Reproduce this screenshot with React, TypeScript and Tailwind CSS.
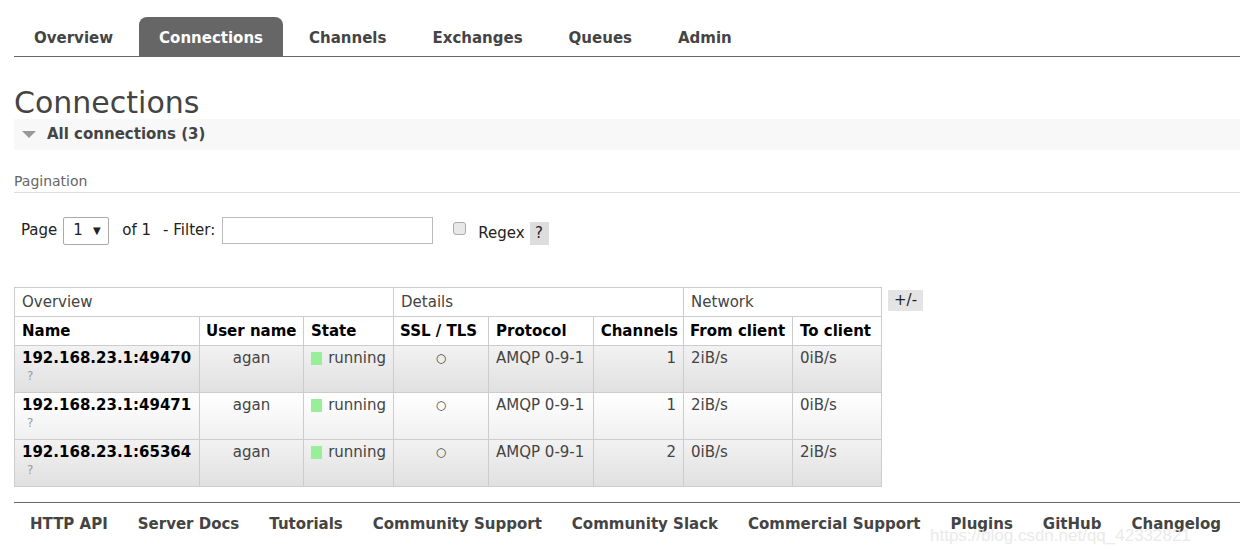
const TABS = ["Overview", "Connections", "Channels", "Exchanges", "Queues", "Admin"];

const ROWS = [
  { name: "192.168.23.1:49470", channels: 1, from: "2iB/s", to: "0iB/s", alt: false },
  { name: "192.168.23.1:49471", channels: 1, from: "2iB/s", to: "0iB/s", alt: true },
  { name: "192.168.23.1:65364", channels: 2, from: "0iB/s", to: "2iB/s", alt: false },
];

const FOOTER = [
  "HTTP API",
  "Server Docs",
  "Tutorials",
  "Community Support",
  "Community Slack",
  "Commercial Support",
  "Plugins",
  "GitHub",
  "Changelog",
];

const td = "border border-[#ccc] px-[7px] pt-[3px] align-top whitespace-nowrap";
const th = "border border-[#ccc] px-[7px] h-[29px] text-left font-bold text-black whitespace-nowrap";

export default function App() {
  return (
    <div className="relative h-[552px] w-[1240px] overflow-hidden bg-white pl-[14px] font-['DejaVu_Sans',Verdana,sans-serif] text-[15px] text-[#444]">
      {/* tabs */}
      <ul className="flex h-[57px] items-end border-b border-[#666]">
        {TABS.map((t) => (
          <li
            key={t}
            className={
              t === "Connections"
                ? "mr-[6px] flex h-[39px] items-center rounded-t-[8px] bg-[#666] px-[20px] pt-[3px] font-bold text-white"
                : "mr-[6px] flex h-[39px] items-center px-[20px] pt-[3px] font-bold text-[#444]"
            }
          >
            {t}
          </li>
        ))}
      </ul>

      <h1 className="mt-[29px] h-[33px] text-[30px] leading-[33px] text-[#444]">Connections</h1>

      <div className="flex h-[31px] items-center bg-[#f8f8f8] pl-[8px]">
        <span className="mr-[11px] h-0 w-0 border-x-[7px] border-t-[7px] border-x-transparent border-t-[#999]" />
        <span className="font-bold text-[#444]">All connections (3)</span>
      </div>

      <div className="mt-[22px] border-b border-[#ddd] pb-[2px] text-[14px] leading-[18px] text-[#666]">Pagination</div>

      <div className="mt-[23px] flex items-center pl-[7px] text-[#222]">
        <span>Page</span>
        <span className="ml-[6px] flex h-[28px] w-[46px] items-center rounded-[2px] border border-[#aaa] pl-[9px] text-[#222]">
          1<span className="ml-[10px] text-[10px]">▼</span>
        </span>
        <span className="ml-[13px]">of 1</span>
        <span className="ml-[12px]">- Filter:</span>
        <span className="ml-[7px] h-[27px] w-[211px] border border-[#bbb] bg-white" />
        <span className="ml-[20px] -mt-[5px] h-[13px] w-[13px] rounded-[3px] border border-[#aaa] bg-[#e8e8e8]" />
        <span className="ml-[12px] mt-[6px]">Regex</span>
        <span className="ml-[5px] mt-[6px] flex h-[23px] w-[19px] items-center justify-center bg-[#ddd]">?</span>
      </div>

      {/* table */}
      <div className="mt-[42px] flex items-start">
        <table className="w-[867px] table-fixed border-collapse text-[15px] leading-[18px]">
          <colgroup>
            <col className="w-[185px]" />
            <col className="w-[104px]" />
            <col className="w-[90px]" />
            <col className="w-[95px]" />
            <col className="w-[105px]" />
            <col className="w-[90px]" />
            <col className="w-[109px]" />
            <col className="w-[89px]" />
          </colgroup>
          <thead>
            <tr className="h-[29px] text-[#444]">
              <td colSpan={3} className="border border-[#ccc] px-[7px]">Overview</td>
              <td colSpan={3} className="border border-[#ccc] px-[7px]">Details</td>
              <td colSpan={2} className="border border-[#ccc] px-[7px]">Network</td>
            </tr>
            <tr>
              <th className={th}>Name</th>
              <th className={th + " !px-[6px]"}>User name</th>
              <th className={th}>State</th>
              <th className={th + " !px-[6px]"}>SSL / TLS</th>
              <th className={th}>Protocol</th>
              <th className={th + " !px-[5px] !text-right"}>Channels</th>
              <th className={th + " !px-[6px]"}>From client</th>
              <th className={th}>To client</th>
            </tr>
          </thead>
          <tbody>
            {ROWS.map((r) => (
              <tr
                key={r.name}
                className={
                  r.alt
                    ? "h-[47px] bg-gradient-to-b from-[#ffffff] to-[#f0f0f0]"
                    : "h-[47px] bg-gradient-to-b from-[#f2f2f2] to-[#e0e0e0]"
                }
              >
                <td className={td}>
                  <div className="font-bold text-black">{r.name}</div>
                  <div className="pl-[5px] pt-[1px] text-[12px] leading-[16px] text-[#999]">?</div>
                </td>
                <td className={td + " text-center"}>agan</td>
                <td className={td}>
                  <span className="flex items-center">
                    <span className="mr-[6px] h-[13px] w-[13px] bg-[#99ee99]" />
                    running
                  </span>
                </td>
                <td className={td + " text-center text-[12px]"}>○</td>
                <td className={td}>AMQP 0-9-1</td>
                <td className={td + " text-right"}>{r.channels}</td>
                <td className={td}>{r.from}</td>
                <td className={td}>{r.to}</td>
              </tr>
            ))}
          </tbody>
        </table>
        <span className="ml-[6px] mt-[3px] flex h-[21px] w-[35px] items-center justify-center bg-[#e4e4e4] text-[#222]">+/-</span>
      </div>

      {/* footer */}
      <div className="mt-[15px] flex h-[44px] items-center whitespace-nowrap border-t border-[#666] pl-[16px]">
        {FOOTER.map((f) => (
          <span key={f} className="mr-[30px] font-bold text-[#444]">
            {f}
          </span>
        ))}
      </div>

      <div className="absolute left-[930px] top-[523px] font-['Liberation_Sans',Arial,sans-serif] text-[17px] text-[#e6e6e6] opacity-80">
        https://blog.csdn.net/qq_42332821
      </div>
    </div>
  );
}
